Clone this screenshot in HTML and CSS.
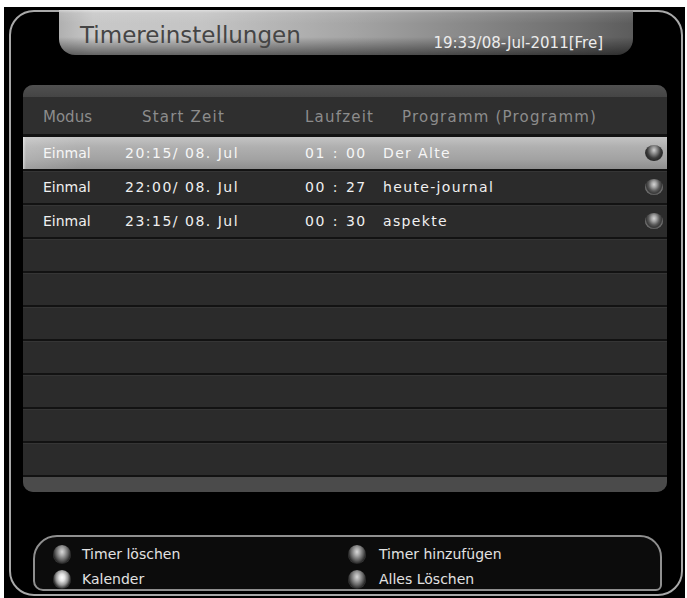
FILE: index.html
```html
<!DOCTYPE html>
<html lang="de">
<head>
<meta charset="utf-8">
<title>Timereinstellungen</title>
<link rel="stylesheet" href="styles.css">
</head>
<body>
<div class="screen">
  <div class="frame">
    <div class="tab">
      <span class="title">Timereinstellungen</span>
      <span class="date">19:33/08-Jul-2011[Fre]</span>
    </div>

    <div class="panel">
      <div class="panel-top"></div>
      <div class="row head">
        <span class="c-mode">Modus</span>
        <span class="c-start sp">Start Zeit</span>
        <span class="c-dur sp">Laufzeit</span>
        <span class="c-prog sp">Programm (Programm)</span>
        <span></span>
      </div>
      <div class="row sel">
        <span class="c-mode">Einmal</span>
        <span class="c-start">20:15/ 08. Jul</span>
        <span class="c-dur">01 : 00</span>
        <span class="c-prog">Der Alte</span>
        <span class="knob"></span>
      </div>
      <div class="row">
        <span class="c-mode">Einmal</span>
        <span class="c-start">22:00/ 08. Jul</span>
        <span class="c-dur">00 : 27</span>
        <span class="c-prog">heute-journal</span>
        <span class="knob"></span>
      </div>
      <div class="row">
        <span class="c-mode">Einmal</span>
        <span class="c-start">23:15/ 08. Jul</span>
        <span class="c-dur">00 : 30</span>
        <span class="c-prog">aspekte</span>
        <span class="knob"></span>
      </div>
      <div class="row"></div>
      <div class="row"></div>
      <div class="row"></div>
      <div class="row"></div>
      <div class="row"></div>
      <div class="row"></div>
      <div class="row"></div>
      <div class="panel-bottom"></div>
    </div>

    <div class="keys">
      <div class="key"><span class="ball"></span><span>Timer löschen</span></div>
      <div class="key"><span class="ball"></span><span>Timer hinzufügen</span></div>
      <div class="key"><span class="ball bright"></span><span>Kalender</span></div>
      <div class="key"><span class="ball"></span><span>Alles Löschen</span></div>
    </div>
  </div>
</div>
</body>
</html>
```

FILE: styles.css
```css
html, body {
  margin: 0;
  padding: 0;
  background: #ffffff;
}

body {
  font-family: "DejaVu Sans", "Liberation Sans", sans-serif;
}

.screen {
  margin: 7px 2px 0 4px;
  height: 591px;
  box-sizing: border-box;
  padding: 3px 2px 2px 5px;
  background: #000;
}

.frame {
  height: 100%;
  box-sizing: border-box;
  border: 2px solid #a9a9a9;
  border-radius: 25px;
  display: flex;
  flex-direction: column;
}

/* title tab */
.tab {
  margin: -2px 48px 0 48px;
  width: 574px;
  height: 45px;
  box-sizing: border-box;
  padding: 0 30px 0 21px;
  display: flex;
  justify-content: space-between;
  align-items: flex-start;
  border-radius: 0 0 16px 16px;
  background:
    linear-gradient(to bottom, rgba(255,255,255,0.45) 0, rgba(255,255,255,0.1) 3px, rgba(0,0,0,0) 30%, rgba(0,0,0,0) 60%, rgba(0,0,0,0.5) 100%),
    linear-gradient(to right, #b0b0b0 0%, #c8c8c8 6%, #c4c4c4 25%, #a6a6a6 50%, #878787 72%, #6e6e6e 90%, #5c5c5c 100%);
}

.title {
  margin-top: 12px;
  font-size: 23px;
  line-height: 27px;
  color: #454545;
}

.date {
  margin-top: 24px;
  font-size: 15px;
  line-height: 18px;
  color: #ececec;
}

/* timer table */
.panel {
  margin: 30px 14px 0 12px;
  height: 407px;
  border-radius: 10px;
  overflow: hidden;
  background: #2b2b2b;
  display: flex;
  flex-direction: column;
}

.panel-top {
  height: 12px;
  background: linear-gradient(to bottom, #505050, #454545);
}

.row {
  height: 32px;
  border-bottom: 2px solid #121212;
  box-shadow: inset 0 1px 0 #353535;
  display: grid;
  grid-template-columns: 82px 180px 78px 1fr 18px;
  align-items: center;
  padding: 0 4px 0 20px;
  font-size: 14px;
  color: #f0f0f0;
  white-space: nowrap;
}

.row.head {
  box-sizing: border-box;
  height: 40px;
  border-bottom-width: 3px;
  background: #2f2f2f;
  box-shadow: none;
  font-size: 15px;
  color: #8c8c8c;
  padding-top: 2px;
}

.row.head .sp { letter-spacing: 1.2px; }
.row.head .c-start { padding-left: 17px; }
.row.head .c-prog { padding-left: 19px; }

.c-start { letter-spacing: 1.5px; }
.c-dur { letter-spacing: 1.5px; word-spacing: 1px; }
.c-prog { letter-spacing: 1.35px; }

.row.sel {
  background:
    linear-gradient(to right, rgba(255,255,255,0.55) 0, rgba(255,255,255,0.15) 3px, rgba(255,255,255,0) 60px),
    linear-gradient(to bottom, #c4c4c4 0%, #b0b0b0 30%, #a2a2a2 70%, #8e8e8e 100%);
  box-shadow: none;
  color: #f6f6f6;
}

.knob {
  width: 18px;
  height: 16px;
  border-radius: 50%;
  background: radial-gradient(ellipse at 50% 34%, #d4d4d4 0, #a4a4a4 20%, #585858 44%, #3a3a3a 60%, #a0a0a0 80%, #5a5a5a 95%);
}

.row.sel .knob {
  background: radial-gradient(ellipse at 50% 32%, #d0d0d0 0, #8c8c8c 24%, #3c3c3c 52%, #2a2a2a 68%, #6a6a6a 82%, #111 95%);
}

.panel-bottom {
  flex: 1;
  background: #4b4b4b;
}

/* colour keys */
.keys {
  margin: 43px 19px 0 22px;
  height: 56px;
  box-sizing: border-box;
  border: 2px solid #8f8f8f;
  border-radius: 24px 22px 6px 10px;
  background: #0c0c0c;
  padding: 7px 0 0 18px;
  display: grid;
  grid-template-columns: 295px 1fr;
  grid-auto-rows: 20px;
  row-gap: 5px;
}

.key {
  display: flex;
  align-items: center;
  gap: 11px;
  font-size: 14px;
  color: #e2e2e2;
  white-space: nowrap;
}

.key:nth-child(even) { gap: 13px; }

.ball {
  flex: none;
  width: 18px;
  height: 19px;
  border-radius: 50%;
  background: radial-gradient(ellipse at 50% 36%, #d8d8d8 0, #a8a8a8 22%, #6a6a6a 46%, #2a2a2a 68%, #5a5a5a 84%, #1c1c1c 100%);
}

.ball.bright {
  background: radial-gradient(ellipse at 50% 40%, #ffffff 0, #e4e4e4 22%, #9a9a9a 46%, #2e2e2e 68%, #5a5a5a 84%, #1c1c1c 100%);
}
```
